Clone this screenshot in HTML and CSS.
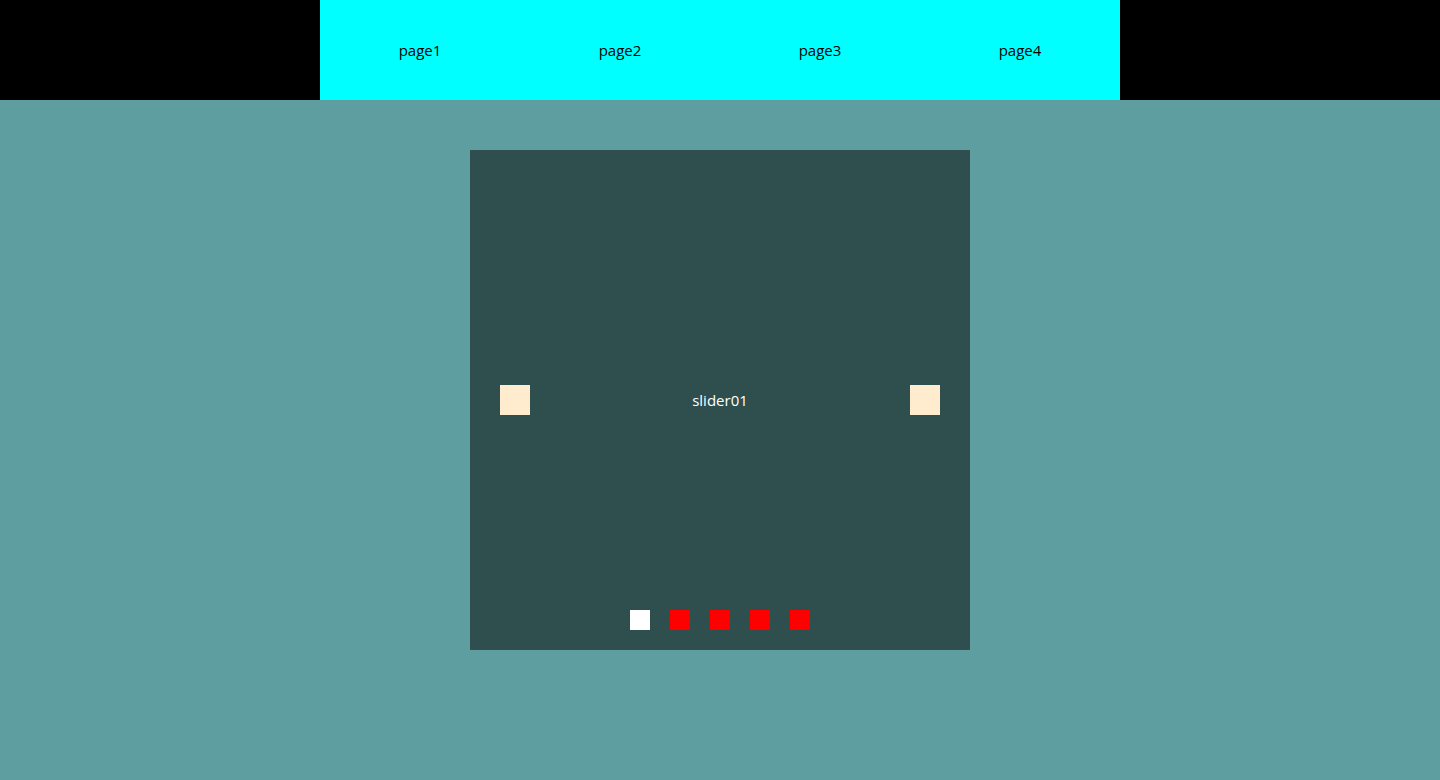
FILE: index.html
```html
<!DOCTYPE html>
<html>
<head>
<meta charset="utf-8">
<link rel="stylesheet" href="styles.css">
</head>
<body>
<header class="top">
  <nav class="nav">
    <a class="nav-item">page1</a>
    <a class="nav-item">page2</a>
    <a class="nav-item">page3</a>
    <a class="nav-item">page4</a>
  </nav>
</header>
<main class="main">
  <section class="slider">
    <div class="slide-row">
      <button class="arrow"></button>
      <span class="slide-text">slider01</span>
      <button class="arrow"></button>
    </div>
    <div class="dots">
      <span class="dot active"></span>
      <span class="dot"></span>
      <span class="dot"></span>
      <span class="dot"></span>
      <span class="dot"></span>
    </div>
  </section>
</main>
</body>
</html>
```
FILE: styles.css
```css
html, body {
  margin: 0;
  padding: 0;
}
body {
  background: #5f9ea0;
  font-family: "Open Sans", "Noto Sans", sans-serif;
  font-size: 15px;
  height: 780px;
}
.top {
  background: #000;
  height: 100px;
  display: flex;
  justify-content: center;
}
.nav {
  width: 800px;
  background: #00ffff;
  display: flex;
}
.nav-item {
  flex: 1;
  display: flex;
  align-items: center;
  justify-content: center;
  color: #000;
}
.main {
  display: flex;
  justify-content: center;
  padding-top: 50px;
}
.slider {
  width: 500px;
  height: 500px;
  background: #2f4f4f;
  display: flex;
  flex-direction: column;
}
.slide-row {
  height: 460px;
  box-sizing: border-box;
  padding: 40px 30px 0;
  display: flex;
  align-items: center;
  justify-content: space-between;
}
.arrow {
  width: 30px;
  height: 30px;
  border: 0;
  padding: 0;
  background: #ffebcd;
}
.slide-text {
  color: #fff;
}
.dots {
  display: flex;
  justify-content: center;
  gap: 20px;
}
.dot {
  width: 20px;
  height: 20px;
  background: #ff0000;
}
.dot.active {
  background: #fff;
}
```
